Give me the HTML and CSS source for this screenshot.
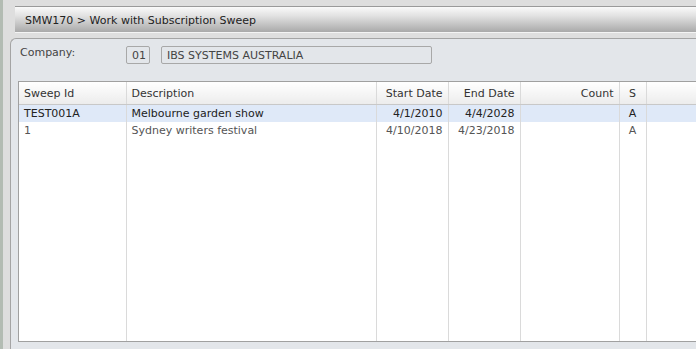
FILE: index.html
```html
<!doctype html>
<html>
    <head>
        <title>SMW170 - Work with Subscription Sweep</title>
        <link rel="stylesheet" href="styles.css">
    </head>
    <body>
        <div class="page">
            <div class="title-bar">SMW170 &gt; Work with Subscription Sweep</div>
            <div class="panel">
                <div class="company-row">
                    <span class="label">Company:</span>
                    <span class="field code">01</span>
                    <span class="field name">IBS SYSTEMS AUSTRALIA</span>
                </div>
                <div class="grid-wrap">
                    <table class="grid">
                        <colgroup>
                            <col class="c-id">
                            <col class="c-desc">
                            <col class="c-date">
                            <col class="c-date">
                            <col class="c-count">
                            <col class="c-s">
                            <col>
                        </colgroup>
                        <thead>
                            <tr>
                                <th>Sweep Id</th>
                                <th>Description</th>
                                <th class="num">Start Date</th>
                                <th class="num">End Date</th>
                                <th class="num">Count</th>
                                <th class="mid">S</th>
                                <th></th>
                            </tr>
                        </thead>
                        <tbody>
                            <tr class="selected">
                                <td>TEST001A</td>
                                <td>Melbourne garden show</td>
                                <td class="num">4/1/2010</td>
                                <td class="num">4/4/2028</td>
                                <td class="num"></td>
                                <td class="mid">A</td>
                                <td></td>
                            </tr>
                            <tr>
                                <td>1</td>
                                <td>Sydney writers festival</td>
                                <td class="num">4/10/2018</td>
                                <td class="num">4/23/2018</td>
                                <td class="num"></td>
                                <td class="mid">A</td>
                                <td></td>
                            </tr>
                            <tr class="filler">
                                <td></td><td></td><td></td><td></td><td></td><td></td><td></td>
                            </tr>
                        </tbody>
                    </table>
                </div>
            </div>
        </div>
    </body>
</html>
```

FILE: styles.css
```css
html, body{
    margin: 0;
    height: 100%;
    overflow: hidden;
}
body{
    font-family: 'DejaVu Sans', 'Liberation Sans', sans-serif;
    font-size: 11px;
    color: #333;
    background: #dcdcdc;
}
.page{
    height: 349px;
    border-left: 3px solid #b3bcb3;
    background: #dedede;
    padding-top: 6px;
    box-sizing: border-box;
    display: flex;
    flex-direction: column;
}

/* TITLE */
.title-bar{
    margin-left: 12px;
    height: 25px;
    border-top: 1px solid #9a9a9a;
    border-bottom: 1px solid #f4f4f4;
    background: linear-gradient(#fafafa, #e2e2e2 35%, #a9a9a9);
    padding-left: 10px;
    line-height: 27px;
    font-size: 11px;
    color: #222;
}

/* PANEL */
.panel{
    flex: 1;
    margin-top: 5px;
    margin-left: 7px;
    border-top: 1px solid #a4a4a4;
    border-left: 1px solid #a4a4a4;
    border-top-left-radius: 6px;
    background: #e3e6ea;
    padding: 6px 0 0 7px;
    display: flex;
    flex-direction: column;
}
.company-row{
    display: flex;
    align-items: center;
    height: 20px;
}
.label{
    width: 106px;
    padding-left: 2px;
    color: #444;
    margin-top: -6px;
}
.field{
    height: 18px;
    box-sizing: border-box;
    border: 1px solid #a8a8a8;
    border-radius: 2px;
    padding-left: 5px;
    line-height: 17px;
    color: #444;
}
.code{
    width: 24px;
}
.name{
    width: 271px;
    margin-left: 11px;
}

/* GRID */
.grid-wrap{
    margin-top: 16px;
    height: 259px;
    border-top: 1px solid #a0a0a0;
    border-left: 1px solid #a0a0a0;
    border-bottom: 1px solid #a0a0a0;
    background: #fff;
    overflow: hidden;
}
.grid{
    width: 740px;
    height: 100%;
    table-layout: fixed;
    border-collapse: collapse;
}
.c-id{ width: 107px; }
.c-desc{ width: 250px; }
.c-date{ width: 72px; }
.c-count{ width: 99px; }
.c-s{ width: 27px; }

.grid th, .grid td{
    border-right: 1px solid #dadada;
    padding: 0 5px;
    text-align: left;
    white-space: nowrap;
    overflow: hidden;
}
.grid th{
    height: 22px;
    padding-top: 0;
    font-weight: normal;
    color: #333;
    background: linear-gradient(#ffffff, #ececec);
    border-bottom: 1px solid #c8c8c8;
}
.grid td{
    height: 17px;
    line-height: 17px;
    color: #555;
}
.grid .selected td{
    background: #dfe9f8;
    color: #222;
}
.grid .num{
    text-align: right;
}
.grid .mid{
    text-align: center;
}
.grid .filler td{
    height: auto;
}
```
